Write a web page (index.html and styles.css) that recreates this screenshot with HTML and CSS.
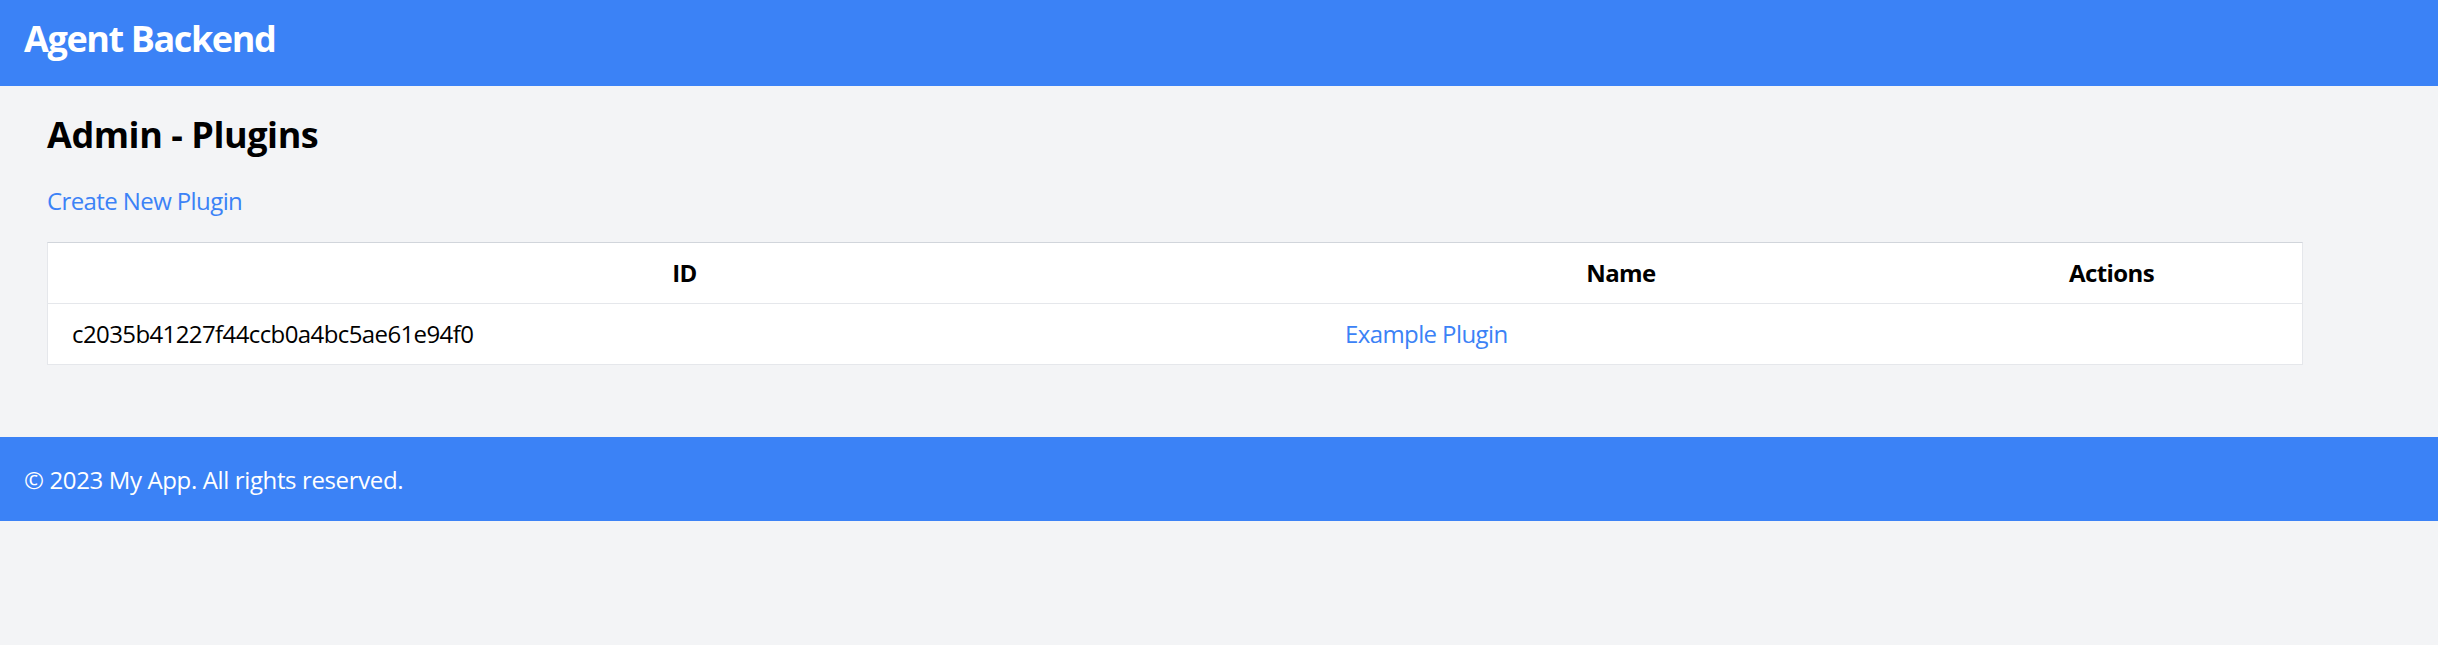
FILE: index.html
```html
<!DOCTYPE html>
<html lang="en">
<head>
<meta charset="utf-8">
<title>Agent Backend</title>
<link rel="stylesheet" href="styles.css">
</head>
<body>
<header class="site-header">
  <div class="brand">Agent Backend</div>
</header>
<main class="main">
  <h1 class="page-title">Admin - Plugins</h1>
  <a class="create-link" href="#">Create New Plugin</a>
  <table class="plugins-table">
    <colgroup>
      <col class="col-id">
      <col class="col-name">
      <col class="col-actions">
    </colgroup>
    <thead>
      <tr>
        <th>ID</th>
        <th>Name</th>
        <th>Actions</th>
      </tr>
    </thead>
    <tbody>
      <tr>
        <td>c2035b41227f44ccb0a4bc5ae61e94f0</td>
        <td><a class="row-link" href="#">Example Plugin</a></td>
        <td></td>
      </tr>
    </tbody>
  </table>
</main>
<footer class="site-footer">
  <p class="copyright">© 2023 My App. All rights reserved.</p>
</footer>
</body>
</html>
```
FILE: styles.css
```css
html, body {
  margin: 0;
  padding: 0;
}
body {
  background: #f3f4f6;
  font-family: "Open Sans", "Noto Sans", "Liberation Sans", sans-serif;
  font-size: 24px;
  line-height: 36px;
  color: #000;
  letter-spacing: -0.6px;
}
.site-header {
  background: #3b82f6;
  color: #fff;
  height: 86px;
  box-sizing: border-box;
  padding: 21px 24px 0;
}
.brand {
  font-size: 36px;
  line-height: 36px;
  font-weight: 700;
  letter-spacing: -1.4px;
}
.main {
  padding: 25px 0 24px 47px;
}
.page-title {
  margin: 0 0 24px;
  font-size: 36px;
  line-height: 48px;
  font-weight: 700;
  letter-spacing: -0.45px;
}
.create-link {
  display: block;
  width: max-content;
  color: #3b82f6;
  text-decoration: none;
  margin-bottom: 23px;
}
.plugins-table {
  width: 2256px;
  table-layout: fixed;
  border-collapse: separate;
  border-spacing: 0;
  background: #fff;
  border: 1px solid #e5e7eb;
  border-top-color: #d1d5db;
}
.col-id { width: 1273px; }
.col-name { width: 600px; }
.col-actions { width: 381px; }
.plugins-table th,
.plugins-table td {
  padding: 12px 24px;
  line-height: 36px;
  font-size: 24px;
}
.plugins-table th {
  font-weight: 700;
  text-align: center;
  border-bottom: 1px solid #e5e7eb;
}
.plugins-table td {
  text-align: left;
}
.row-link {
  color: #3b82f6;
  text-decoration: none;
}
.site-footer {
  margin-top: 48px;
  background: #3b82f6;
  color: #fff;
  padding: 25px 24px 23px;
}
.copyright {
  margin: 0;
  letter-spacing: -0.37px;
}
```
